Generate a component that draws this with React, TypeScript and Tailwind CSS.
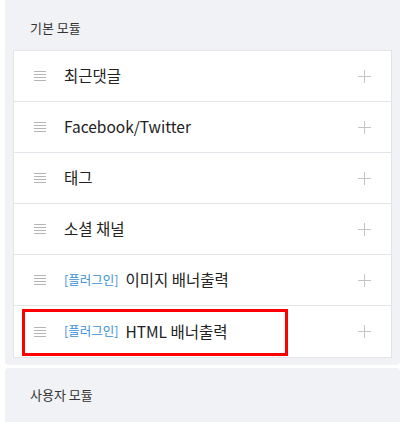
import React from "react";

const font = { fontFamily: '"Noto Sans CJK KR", "Noto Sans", sans-serif' };

function Handle() {
  return (
    <div className="flex w-[12px] flex-col gap-[2px]">
      <div className="h-px bg-[#b5b5b5]" />
      <div className="h-px bg-[#b5b5b5]" />
      <div className="h-px bg-[#b5b5b5]" />
      <div className="h-px bg-[#b5b5b5]" />
    </div>
  );
}

function Plus() {
  return (
    <svg width="13" height="13" viewBox="0 0 13 13" className="block">
      <path d="M6.5 0V13M0 6.5H13" stroke="#c4c4c4" strokeWidth="1" />
    </svg>
  );
}

type Row = { plugin?: boolean; label: string; highlight?: boolean };

const rows: Row[] = [
  { label: "최근댓글" },
  { label: "Facebook/Twitter" },
  { label: "태그" },
  { label: "소셜 채널" },
  { plugin: true, label: "이미지 배너출력" },
  { plugin: true, label: "HTML 배너출력", highlight: true },
];

export default function App() {
  return (
    <div className="h-[422px] w-[402px] overflow-hidden bg-white" style={font}>
      <div className="-mt-[6px] ml-[5px] w-[395px] rounded-[4px] bg-[#f1f2f6] px-2 pb-[7px]">
        <div className="h-[56px] pl-[17px] pt-[25px] text-[13px] leading-[17px] text-[#333]">기본 모듈</div>
        <div className="border border-[#e2e4ea] bg-white">
          {rows.map((r, i) => (
            <div
              key={i}
              className={`relative flex h-[51px] items-center pl-[20px] pr-[20px] ${i < rows.length - 1 ? "border-b border-[#e2e4ea]" : ""}`}
            >
              <Handle />
              <div className="ml-[18px] flex flex-1 items-center text-[15.5px] text-[#222]">
                {r.plugin && <span className="mr-[7px] text-[12.5px] text-[#3b8fd9]">[플러그인]</span>}
                <span>{r.label}</span>
              </div>
              <Plus />
              {r.highlight && (
                <div className="absolute left-[8px] top-[3px] h-[47px] w-[266px] border-[3px] border-[#ff0000]" />
              )}
            </div>
          ))}
        </div>
      </div>
      <div className="ml-[5px] mt-[3px] h-[80px] w-[395px] rounded-[4px] bg-[#f1f2f6]">
        <div className="pl-[25px] pt-[18px] text-[13px] leading-[17px] text-[#333]">사용자 모듈</div>
      </div>
    </div>
  );
}
